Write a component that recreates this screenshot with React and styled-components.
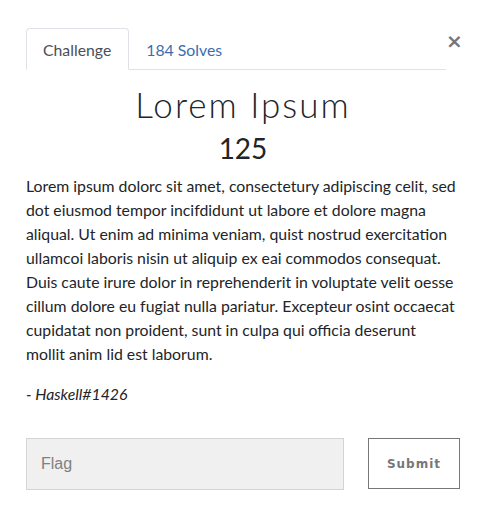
import React, { useState } from 'react';
import styled, { createGlobalStyle } from 'styled-components';

const GlobalStyle = createGlobalStyle`
  body {
    margin: 0;
    background: #fff;
    font-family: Lato, "Open Sans", sans-serif;
    color: #212529;
  }
`;

const Modal = styled.div`
  width: 434px;
  padding: 28px 26px 30px 26px;
`;

const Header = styled.div`
  display: flex;
  align-items: flex-start;
`;

const TabList = styled.ul`
  flex: 1;
  display: flex;
  margin: 0;
  padding: 0;
  list-style: none;
  border-bottom: 1px solid #dee2e6;
`;

const Tab = styled.li`
  margin-bottom: -1px;
  padding: 10px 17px 9px 16px;
  font-size: 15.8px;
  line-height: 21px;
  cursor: pointer;
  border: 1px solid ${p => (p.$active ? '#dee2e6' : 'transparent')};
  border-bottom-color: ${p => (p.$active ? '#fff' : 'transparent')};
  border-radius: 4px 4px 0 0;
  background: ${p => (p.$active ? '#fff' : 'transparent')};
  color: ${p => (p.$active ? '#495057' : '#3a6db0')};
`;

const Close = styled.button`
  width: 14px;
  margin-top: 3px;
  padding: 0;
  border: none;
  background: none;
  font-family: "DejaVu Sans", sans-serif;
  font-size: 20px;
  font-weight: bold;
  line-height: 20px;
  color: #777;
  cursor: pointer;
`;

const Title = styled.h2`
  margin: 13px 0 0 0;
  text-align: center;
  font-family: Lato, sans-serif;
  font-weight: 300;
  font-size: 35px;
  letter-spacing: 2px;
  line-height: 42px;
  color: #212529;
`;

const Points = styled.h3`
  margin: 5px 0 0 0;
  text-align: center;
  font-weight: 400;
  font-size: 28px;
  line-height: 36px;
  color: #212529;
`;

const Description = styled.p`
  margin: 8px 0 0 0;
  padding-right: 2px;
  font-size: 15.8px;
  line-height: 24px;
  color: #212529;
`;

const Author = styled.p`
  margin: 16px 0 0 0;
  font-size: 15.8px;
  line-height: 24px;
  font-style: italic;
`;

const FlagForm = styled.form`
  display: flex;
  gap: 24px;
  margin-top: 32px;
`;

const FlagInput = styled.input`
  flex: 1;
  box-sizing: border-box;
  height: 52px;
  padding: 0 14px;
  border: 1px solid #d4d4d4;
  background: #f0f0f0;
  font-family: "Liberation Sans", Arial, sans-serif;
  font-size: 16px;
  color: #495057;
  outline: none;

  &::placeholder {
    color: #808080;
  }
`;

const SubmitButton = styled.button`
  box-sizing: border-box;
  width: 92px;
  height: 51px;
  border: 1px solid #777;
  background: #fff;
  font-family: "DejaVu Sans", sans-serif;
  font-weight: bold;
  font-size: 12px;
  letter-spacing: 1px;
  color: #777;
  cursor: pointer;
`;

export default function App() {
  const [tab, setTab] = useState('challenge');

  return (
    <>
      <GlobalStyle />
      <Modal>
        <Header>
          <TabList>
            <Tab $active={tab === 'challenge'} onClick={() => setTab('challenge')}>Challenge</Tab>
            <Tab $active={tab === 'solves'} onClick={() => setTab('solves')}>184 Solves</Tab>
          </TabList>
          <Close aria-label="Close">×</Close>
        </Header>

        <Title>Lorem Ipsum</Title>
        <Points>125</Points>

        <Description>
          Lorem ipsum dolorc sit amet, consectetury adipiscing celit, sed dot eiusmod tempor incifdidunt ut labore et dolore magna aliqual. Ut enim ad minima veniam, quist nostrud exercitation ullamcoi laboris nisin ut aliquip ex eai commodos consequat. Duis caute irure dolor in reprehenderit in voluptate velit oesse cillum dolore eu fugiat nulla pariatur. Excepteur osint occaecat cupidatat non proident, sunt in culpa qui officia deserunt mollit anim lid est laborum.
        </Description>
        <Author>- Haskell#1426</Author>

        <FlagForm onSubmit={e => e.preventDefault()}>
          <FlagInput placeholder="Flag" />
          <SubmitButton type="submit">Submit</SubmitButton>
        </FlagForm>
      </Modal>
    </>
  );
}
